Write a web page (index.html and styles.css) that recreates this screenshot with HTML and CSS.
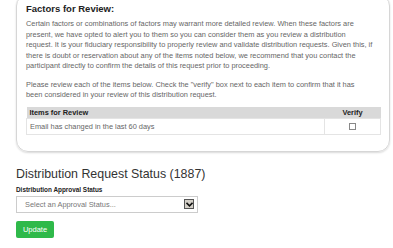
FILE: index.html
```html
<!DOCTYPE html>
<html lang="en">
<head>
    <meta charset="UTF-8">
    <meta name="viewport" content="width=device-width, initial-scale=1.0">
    <title>Distribution Request</title>
    <link rel="stylesheet" href="styles.css">
</head>
<body>
    <div class="review-card">
        <h3>Factors for Review:</h3>
        <p>Certain factors or combinations of factors may warrant more detailed review. When these factors are<br>
        present, we have opted to alert you to them so you can consider them as you review a distribution<br>
        request. It is your fiduciary responsibility to properly review and validate distribution requests. Given this, if<br>
        there is doubt or reservation about any of the items noted below, we recommend that you contact the<br>
        participant directly to confirm the details of this request prior to proceeding.</p>
        <p class="last">Please review each of the items below. Check the "verify" box next to each item to confirm that it has<br>
        been considered in your review of this distribution request.</p>

        <table class="review-table">
            <thead>
                <tr>
                    <th>Items for Review</th>
                    <th class="verify-col">Verify</th>
                </tr>
            </thead>
            <tbody>
                <tr>
                    <td>Email has changed in the last 60 days</td>
                    <td class="verify-col"><span class="checkbox"></span></td>
                </tr>
            </tbody>
        </table>
    </div>

    <div class="status-section">
        <h2>Distribution Request Status (1887)</h2>
        <label>Distribution Approval Status</label>
        <div class="select-box">
            <span>Select an Approval Status...</span>
            <span class="select-arrow">
                <svg width="7" height="5" viewBox="0 0 7 5"><path d="M0.5 0.8 L3.5 3.8 L6.5 0.8" fill="none" stroke="#111" stroke-width="1.6"/></svg>
            </span>
        </div>
        <button class="update-button">Update</button>
    </div>
</body>
</html>
```

FILE: styles.css
```css
* {
    box-sizing: border-box;
    margin: 0;
    padding: 0;
}

body {
    font-family: "Liberation Sans", Arial, sans-serif;
    background: #fff;
    color: #666;
    width: 393px;
    overflow: hidden;
}

.review-card {
    margin: -6px 3px 0 16px;
    padding: 8px 8px 16px 9px;
    border: 1px solid #d6d6d6;
    border-radius: 12px;
    box-shadow: 0 1px 2px rgba(0,0,0,0.15);
}

.review-card h3 {
    font-size: 9.5px;
    color: #222;
    font-weight: bold;
    margin-bottom: 5px;
}

.review-card p {
    font-size: 7.4px;
    line-height: 10.5px;
    white-space: nowrap;
    margin-bottom: 8px;
}

.review-card p.last {
    margin-bottom: 6px;
}

.review-table {
    width: 100%;
    border-collapse: collapse;
    font-size: 7.4px;
}

.review-table th {
    background: #d9d9d9;
    color: #222;
    text-align: left;
    padding: 1px 3px;
    height: 11px;
    font-weight: bold;
}

.review-table td {
    border: 1px solid #e4e4e4;
    padding: 3px 3px;
    height: 16px;
}

.review-table .verify-col {
    width: 56px;
    text-align: center;
}

.checkbox {
    display: inline-block;
    width: 7px;
    height: 7px;
    border: 1px solid #888;
    vertical-align: middle;
}

.status-section {
    padding: 15px 0 0 16px;
}

.status-section h2 {
    font-size: 12.4px;
    font-weight: normal;
    color: #333;
    margin-bottom: 5px;
}

.status-section label {
    display: block;
    font-size: 6.4px;
    font-weight: bold;
    color: #222;
    margin-bottom: 3px;
}

.select-box {
    width: 182px;
    height: 17px;
    border: 1px solid #ccc;
    display: flex;
    align-items: center;
    justify-content: space-between;
    padding: 0 3px 0 8px;
    font-size: 7.4px;
    color: #777;
}

.select-arrow {
    width: 10px;
    height: 10px;
    background: #d4d0c8;
    border: 1px solid #555;
    display: flex;
    align-items: center;
    justify-content: center;
}

.update-button {
    margin-top: 8px;
    background: #2fb94a;
    color: #fff;
    border: none;
    border-radius: 2px;
    font-family: inherit;
    font-size: 7.5px;
    width: 38px;
    height: 17px;
}
```
